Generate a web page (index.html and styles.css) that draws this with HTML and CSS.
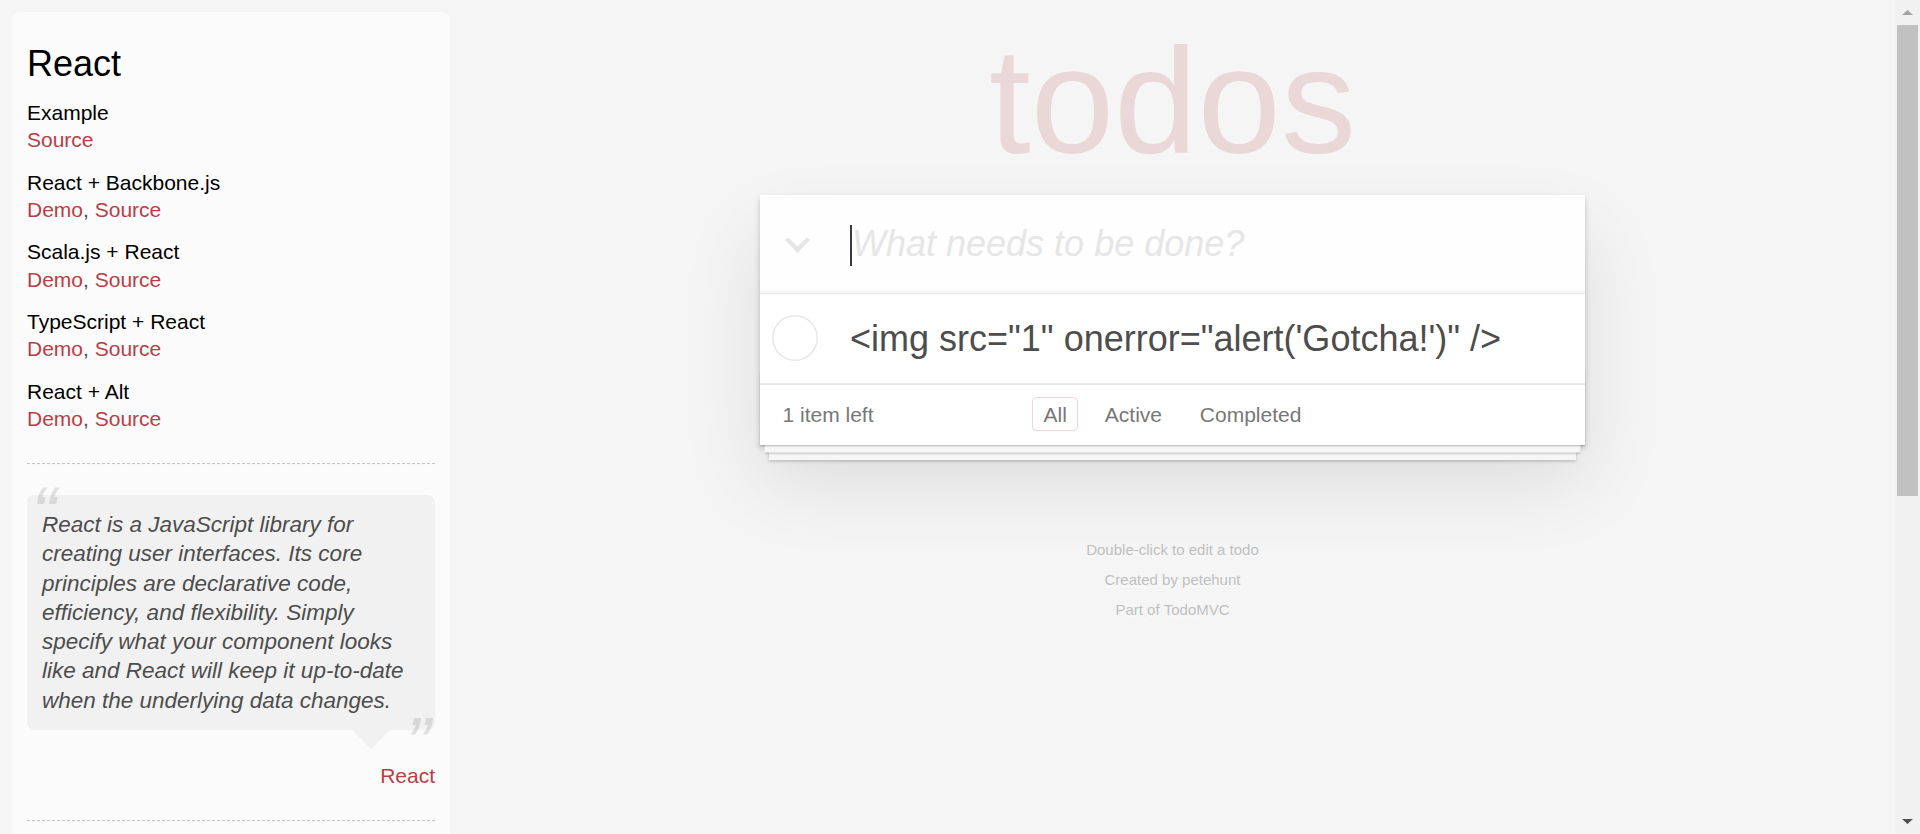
FILE: index.html
```html
<!DOCTYPE html>
<html lang="en">
<head>
<meta charset="utf-8">
<title>React • TodoMVC</title>
<link rel="stylesheet" href="styles.css">
</head>
<body>
<div class="viewport">
  <div class="page">
    <aside class="learn">
      <header>
        <h3>React</h3>
        <div class="source-links">
          <h5>Example</h5>
          <div class="link-line"><a href="#">Source</a></div>
          <h5>React + Backbone.js</h5>
          <div class="link-line"><a href="#">Demo</a>, <a href="#">Source</a></div>
          <h5>Scala.js + React</h5>
          <div class="link-line"><a href="#">Demo</a>, <a href="#">Source</a></div>
          <h5>TypeScript + React</h5>
          <div class="link-line"><a href="#">Demo</a>, <a href="#">Source</a></div>
          <h5>React + Alt</h5>
          <div class="link-line"><a href="#">Demo</a>, <a href="#">Source</a></div>
        </div>
      </header>
      <hr>
      <blockquote class="quote">
        <div class="speech-bubble">
          <p>React is a JavaScript library for creating user interfaces. Its core principles are declarative code, efficiency, and flexibility. Simply specify what your component looks like and React will keep it up-to-date when the underlying data changes.</p>
        </div>
        <footer class="quote-footer"><a href="#">React</a></footer>
      </blockquote>
      <hr>
    </aside>
    <main class="main-col">
      <h1 class="title">todos</h1>
      <section class="todoapp">
        <header class="new-row">
          <label class="toggle-all" for="new-todo">
            <svg width="25" height="17" viewBox="0 0 25 17"><polygon points="0,3 3.5,0.5 12.5,9.5 21.5,0.5 25,3 12.5,16" fill="#e6e6e6"/></svg>
          </label>
          <span class="caret"></span>
          <input class="new-todo" id="new-todo" placeholder="What needs to be done?">
        </header>
        <section class="main">
          <ul class="todo-list">
            <li>
              <span class="toggle"><svg width="60" height="60" viewBox="0 0 60 60"><circle cx="30" cy="30" r="22.2" fill="none" stroke="#e6e6e6" stroke-width="1.4"/></svg></span>
              <label class="todo-text">&lt;img src="1" onerror="alert('Gotcha!')" /&gt;</label>
            </li>
          </ul>
        </section>
        <footer class="footer">
          <span class="todo-count"><strong>1</strong> item left</span>
          <ul class="filters">
            <li><a href="#" class="selected">All</a></li>
            <li><a href="#">Active</a></li>
            <li><a href="#">Completed</a></li>
          </ul>
          <span></span>
        </footer>
      </section>
      <footer class="info">
        <p>Double-click to edit a todo</p>
        <p>Created by <a href="#">petehunt</a></p>
        <p>Part of <a href="#">TodoMVC</a></p>
      </footer>
    </main>
  </div>
  <div class="scrollbar">
    <div class="sb-btn"><svg width="11" height="5" viewBox="0 0 11 5"><polygon points="0,5 5.5,0 11,5" fill="#a3a3a3"/></svg></div>
    <div class="sb-track"><div class="sb-thumb"></div></div>
    <div class="sb-btn"><svg width="11" height="5" viewBox="0 0 11 5"><polygon points="0,0 11,0 5.5,5" fill="#505050"/></svg></div>
  </div>
</div>
</body>
</html>
```
FILE: styles.css
```css
* { box-sizing: border-box; }

html, body {
  margin: 0;
  padding: 0;
  height: 100%;
}

body {
  font-family: "Liberation Sans", Arial, Helvetica, sans-serif;
  font-size: 21px;
  font-weight: 300;
  line-height: 29.4px;
  background: #f5f5f5;
  color: #4d4d4d;
  overflow: hidden;
}

.viewport {
  display: flex;
  height: 834px;
  overflow: hidden;
}

.page {
  flex: 1;
  min-width: 0;
  display: flex;
  align-items: flex-start;
}

/* ---------- Sidebar ---------- */
.learn {
  flex: none;
  width: 438px;
  min-height: 900px;
  margin: 12px 0 0 12px;
  padding: 15px;
  border-radius: 7.5px;
  background: rgba(255, 255, 255, 0.6);
}

.learn a {
  color: #b83f45;
  text-decoration: none;
  font-weight: normal;
}

.learn h3 {
  margin: 15px 0;
  font-size: 36px;
  font-weight: 500;
  line-height: 1.2;
  color: #000;
}

.learn h5 {
  margin: 15px 0 0;
  font-size: 21px;
  font-weight: 500;
  line-height: 1.2;
  color: #000;
}

.link-line {
  font-size: 21px;
  line-height: 29.4px;
}

.learn hr {
  margin: 30px 0;
  height: 0;
  border: 0;
  border-top: 1.5px dashed #c5c5c5;
  border-bottom: 1.5px dashed #f7f7f7;
}

.quote {
  margin: 30px 0 0;
  padding: 0;
}

.speech-bubble {
  position: relative;
  padding: 15px;
  background: rgba(0, 0, 0, 0.04);
  border-radius: 7.5px;
}

.speech-bubble::after {
  content: '';
  position: absolute;
  top: 100%;
  right: 45px;
  border: 19.5px solid transparent;
  border-top-color: rgba(0, 0, 0, 0.04);
}

.speech-bubble p {
  margin: 0;
  font-size: 22.5px;
  line-height: 1.3;
  font-style: italic;
  font-weight: 300;
}

.speech-bubble p::before {
  content: '\201C';
  position: absolute;
  top: -30px;
  left: 4.5px;
  font-size: 75px;
  opacity: 0.15;
}

.speech-bubble p::after {
  content: '\201D';
  position: absolute;
  bottom: -63px;
  right: 4.5px;
  font-size: 75px;
  opacity: 0.15;
}

.quote-footer {
  margin-top: 30.6px;
  text-align: right;
  font-size: 21px;
  line-height: 29.4px;
}

/* ---------- Todo app ---------- */
.main-col {
  flex: 1;
  min-width: 0;
  display: flex;
  flex-direction: column;
  align-items: center;
}

.title {
  margin: 26px 0 19px;
  font-size: 150px;
  line-height: 150px;
  font-weight: 100;
  color: rgba(175, 47, 47, 0.15);
  text-align: center;
  text-rendering: optimizeLegibility;
}

.todoapp {
  position: relative;
  width: 825px;
  background: #fff;
  box-shadow: 0 3px 6px 0 rgba(0, 0, 0, 0.2),
              0 37.5px 75px 0 rgba(0, 0, 0, 0.1);
}

.new-row {
  display: flex;
  align-items: center;
  height: 98.4px;
  background: rgba(0, 0, 0, 0.003);
  box-shadow: inset 0 -3px 1.5px rgba(0, 0, 0, 0.03);
}

.toggle-all {
  flex: none;
  width: 90px;
  display: flex;
  align-items: center;
  padding-left: 25px;
  margin-top: 2px;
}

.toggle-all svg { display: block; }

.caret {
  flex: none;
  width: 2px;
  height: 41px;
  background: #3a3a3a;
  margin-top: 2px;
}

.new-todo {
  flex: 1;
  min-width: 0;
  height: 100%;
  margin: 0;
  padding: 0 24px 0 0;
  border: 0;
  outline: none;
  background: transparent;
  font-family: inherit;
  font-weight: 300;
  font-size: 36px;
  line-height: 50.4px;
  color: #4d4d4d;
}

.new-todo::placeholder {
  font-style: italic;
  font-weight: 300;
  color: #e6e6e6;
}

.main {
  position: relative;
  z-index: 2;
  border-top: 1.5px solid #e6e6e6;
}

.todo-list {
  margin: 0;
  padding: 0;
  list-style: none;
}

.todo-list li {
  display: flex;
  align-items: center;
  font-size: 36px;
  border-bottom: 1.5px solid #ededed;
}

.toggle {
  flex: none;
  width: 90px;
  padding-left: 4.5px;
  display: flex;
  align-items: center;
}

.toggle svg { display: block; }

.todo-text {
  flex: 1;
  display: block;
  padding: 22.5px 22.5px 22.5px 0;
  line-height: 1.2;
  word-break: break-all;
  color: #4d4d4d;
}

.footer {
  position: relative;
  display: grid;
  grid-template-columns: 1fr auto 1fr;
  align-items: start;
  height: 61.5px;
  padding: 15px 22.5px;
  border-top: 1.5px solid #e6e6e6;
  color: #777;
  font-size: 21px;
  line-height: 29.4px;
}

.footer::before {
  content: '';
  position: absolute;
  right: 0;
  bottom: 0;
  left: 0;
  height: 75px;
  overflow: hidden;
  box-shadow: 0 1.5px 1.5px rgba(0, 0, 0, 0.2),
              0 12px 0 -4.5px #f6f6f6,
              0 13.5px 1.5px -4.5px rgba(0, 0, 0, 0.2),
              0 24px 0 -9px #f6f6f6,
              0 25.5px 3px -9px rgba(0, 0, 0, 0.2);
}

.todo-count strong { font-weight: 300; }

.filters {
  margin: 0;
  padding: 0;
  list-style: none;
  white-space: nowrap;
}

.filters li { display: inline; }

.filters a {
  color: inherit;
  margin: 4.5px;
  padding: 4.5px 10.5px;
  text-decoration: none;
  border: 1.5px solid transparent;
  border-radius: 4.5px;
}

.filters a.selected {
  border-color: rgba(175, 47, 47, 0.2);
}

.info {
  margin-top: 97px;
  display: flex;
  flex-direction: column;
  gap: 15px;
  color: #bfbfbf;
  font-size: 15px;
  text-shadow: 0 1.5px 0 rgba(255, 255, 255, 0.5);
  text-align: center;
}

.info p {
  margin: 0;
  line-height: 15px;
}

.info a {
  color: inherit;
  text-decoration: none;
  font-weight: 400;
}

/* ---------- Scrollbar ---------- */
.scrollbar {
  flex: none;
  width: 25px;
  height: 834px;
  display: flex;
  flex-direction: column;
  background: #f1f1f1;
}

.sb-btn {
  flex: none;
  height: 25px;
  display: flex;
  align-items: center;
  justify-content: center;
}

.sb-btn svg { display: block; }

.sb-track {
  flex: 1;
  padding: 0 2px;
}

.sb-thumb {
  height: 471px;
  background: #c1c1c1;
}
```
